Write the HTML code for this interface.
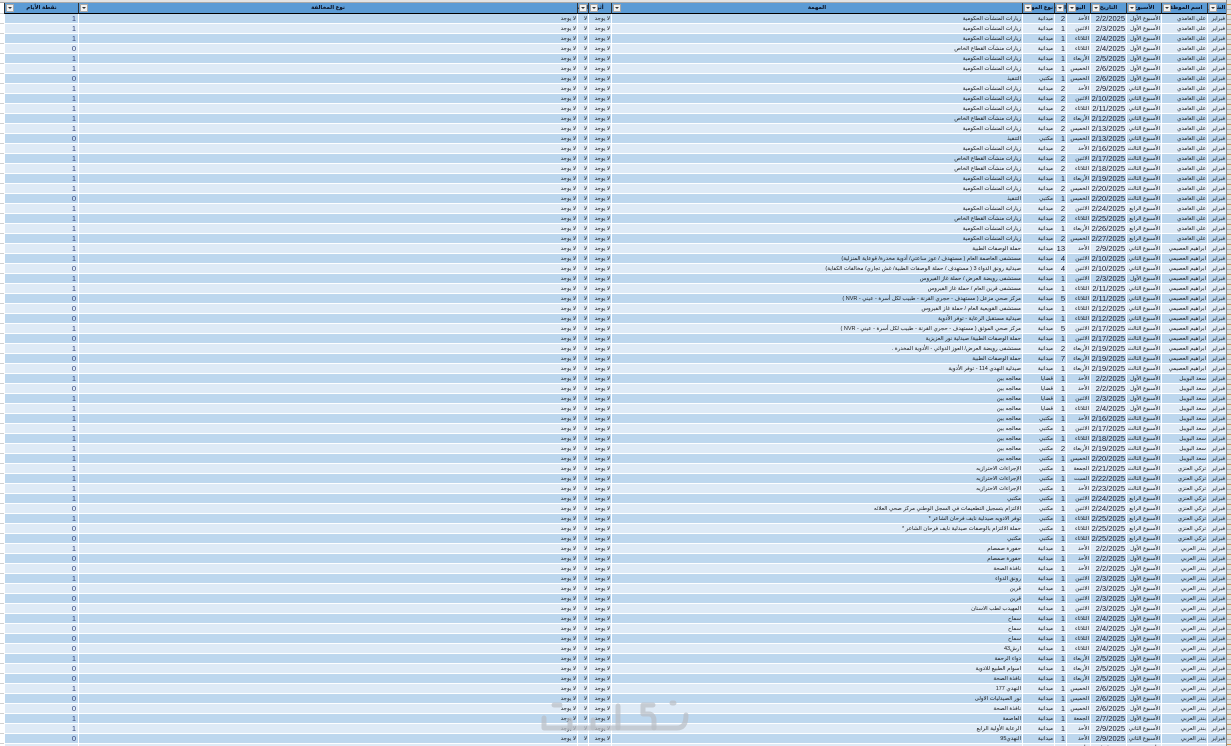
<!DOCTYPE html>
<html lang="ar"><head><meta charset="utf-8"><title>sheet</title>
<style>
html,body{margin:0;padding:0;width:1231px;height:746px;overflow:hidden;background:#fff}
body{position:relative;font-family:"Liberation Sans","DejaVu Sans",sans-serif}
#top{position:absolute;left:0;top:0;width:1231px;height:3px;background:#e4e4e4;border-bottom:1px solid #aaa;box-sizing:border-box}
#lft{position:absolute;left:0;top:4px;width:4px;height:742px;background:repeating-linear-gradient(to bottom,#fff 0,#fff 9px,#d0d0d0 9px,#d0d0d0 10px)}
#rgt{position:absolute;left:1226px;top:0;width:5px;height:746px;background:repeating-linear-gradient(to bottom,#dedede 0,#dedede 4px,#d99a4e 4px,#d99a4e 5px,#dedede 5px,#dedede 9px,#b8b8b8 9px,#b8b8b8 10px);border-left:1px solid #8a8a8a;box-sizing:border-box}
table{position:absolute;left:4px;top:3px;width:1222px;table-layout:fixed;border-collapse:separate;border-spacing:0}
th{position:relative;height:11px;box-sizing:border-box;padding:0;background:#5b9bd5;border-left:1px solid #333;border-bottom:1px solid #000;font:bold 5.5px/10px "Liberation Sans","DejaVu Sans",sans-serif;color:#0a1020;overflow:hidden;white-space:nowrap;text-align:center}
th i{position:absolute;left:1px;top:1px;width:8px;height:8px;box-sizing:border-box;background:#f2f2f2;border:1px solid #a8a8a8}
th i:after{content:"";position:absolute;left:1px;top:2px;border:2px solid transparent;border-top:2px solid #333;border-bottom:0}
td{height:10px;box-sizing:border-box;padding:1px 1px 0;border-left:1px solid #fff;border-bottom:1px solid #fff;font-size:5.5px;line-height:8px;color:#1a1a1a;overflow:hidden;white-space:nowrap;text-align:right}
tbody tr:nth-child(odd) td{background:#bdd7ee}
tbody tr:nth-child(even) td{background:#deeaf6}
td:nth-child(4),td:nth-child(6){font-size:7.5px;color:#1a1a2a}
td:nth-child(12){font-size:7.5px;color:#33427a;padding-right:2px}
svg{position:absolute;left:540px;top:700px;pointer-events:none}
</style></head><body>
<div id="top"></div><div id="lft"></div><div id="rgt"></div>
<table dir="rtl">
<colgroup><col style="width:19px"><col style="width:46px"><col style="width:35px"><col style="width:36px"><col style="width:24px"><col style="width:12px"><col style="width:32px"><col style="width:411px"><col style="width:23px"><col style="width:11px"><col style="width:499px"><col style="width:74px"></colgroup>
<thead><tr><th><i></i>الشهر<th><i></i>اسم الموظف<th><i></i>الأسبوع<th><i></i>التاريخ<th><i></i>اليوم<th><i></i>العدد<th><i></i>نوع المهمة<th><i></i>المهمة<th><i></i>أثر<th><i></i>الإجراء<th><i></i>نوع المخالفة<th><i></i>نقطة الأيام</tr></thead>
<tbody>
<tr><td>فبراير<td>علي الغامدي<td>الأسبوع الأول<td>2/2/2025<td>الأحد<td>2<td>ميدانية<td>زيارات المنشآت الحكومية<td>لا يوجد<td>لا<td>لا يوجد<td>1
<tr><td>فبراير<td>علي الغامدي<td>الأسبوع الأول<td>2/3/2025<td>الاثنين<td>1<td>ميدانية<td>زيارات المنشآت الحكومية<td>لا يوجد<td>لا<td>لا يوجد<td>1
<tr><td>فبراير<td>علي الغامدي<td>الأسبوع الأول<td>2/4/2025<td>الثلاثاء<td>1<td>ميدانية<td>زيارات المنشآت الحكومية<td>لا يوجد<td>لا<td>لا يوجد<td>1
<tr><td>فبراير<td>علي الغامدي<td>الأسبوع الأول<td>2/4/2025<td>الثلاثاء<td>1<td>ميدانية<td>زيارات منشآت القطاع الخاص<td>لا يوجد<td>لا<td>لا يوجد<td>0
<tr><td>فبراير<td>علي الغامدي<td>الأسبوع الأول<td>2/5/2025<td>الأربعاء<td>1<td>ميدانية<td>زيارات المنشآت الحكومية<td>لا يوجد<td>لا<td>لا يوجد<td>1
<tr><td>فبراير<td>علي الغامدي<td>الأسبوع الأول<td>2/6/2025<td>الخميس<td>1<td>ميدانية<td>زيارات المنشآت الحكومية<td>لا يوجد<td>لا<td>لا يوجد<td>1
<tr><td>فبراير<td>علي الغامدي<td>الأسبوع الأول<td>2/6/2025<td>الخميس<td>1<td>مكتبي<td>التنفيذ<td>لا يوجد<td>لا<td>لا يوجد<td>0
<tr><td>فبراير<td>علي الغامدي<td>الأسبوع الثاني<td>2/9/2025<td>الأحد<td>2<td>ميدانية<td>زيارات المنشآت الحكومية<td>لا يوجد<td>لا<td>لا يوجد<td>1
<tr><td>فبراير<td>علي الغامدي<td>الأسبوع الثاني<td>2/10/2025<td>الاثنين<td>2<td>ميدانية<td>زيارات المنشآت الحكومية<td>لا يوجد<td>لا<td>لا يوجد<td>1
<tr><td>فبراير<td>علي الغامدي<td>الأسبوع الثاني<td>2/11/2025<td>الثلاثاء<td>2<td>ميدانية<td>زيارات المنشآت الحكومية<td>لا يوجد<td>لا<td>لا يوجد<td>1
<tr><td>فبراير<td>علي الغامدي<td>الأسبوع الثاني<td>2/12/2025<td>الأربعاء<td>2<td>ميدانية<td>زيارات منشآت القطاع الخاص<td>لا يوجد<td>لا<td>لا يوجد<td>1
<tr><td>فبراير<td>علي الغامدي<td>الأسبوع الثاني<td>2/13/2025<td>الخميس<td>2<td>ميدانية<td>زيارات المنشآت الحكومية<td>لا يوجد<td>لا<td>لا يوجد<td>1
<tr><td>فبراير<td>علي الغامدي<td>الأسبوع الثاني<td>2/13/2025<td>الخميس<td>1<td>مكتبي<td>التنفيذ<td>لا يوجد<td>لا<td>لا يوجد<td>0
<tr><td>فبراير<td>علي الغامدي<td>الأسبوع الثالث<td>2/16/2025<td>الأحد<td>2<td>ميدانية<td>زيارات المنشآت الحكومية<td>لا يوجد<td>لا<td>لا يوجد<td>1
<tr><td>فبراير<td>علي الغامدي<td>الأسبوع الثالث<td>2/17/2025<td>الاثنين<td>2<td>ميدانية<td>زيارات منشآت القطاع الخاص<td>لا يوجد<td>لا<td>لا يوجد<td>1
<tr><td>فبراير<td>علي الغامدي<td>الأسبوع الثالث<td>2/18/2025<td>الثلاثاء<td>2<td>ميدانية<td>زيارات منشآت القطاع الخاص<td>لا يوجد<td>لا<td>لا يوجد<td>1
<tr><td>فبراير<td>علي الغامدي<td>الأسبوع الثالث<td>2/19/2025<td>الأربعاء<td>1<td>ميدانية<td>زيارات المنشآت الحكومية<td>لا يوجد<td>لا<td>لا يوجد<td>1
<tr><td>فبراير<td>علي الغامدي<td>الأسبوع الثالث<td>2/20/2025<td>الخميس<td>2<td>ميدانية<td>زيارات المنشآت الحكومية<td>لا يوجد<td>لا<td>لا يوجد<td>1
<tr><td>فبراير<td>علي الغامدي<td>الأسبوع الثالث<td>2/20/2025<td>الخميس<td>1<td>مكتبي<td>التنفيذ<td>لا يوجد<td>لا<td>لا يوجد<td>0
<tr><td>فبراير<td>علي الغامدي<td>الأسبوع الرابع<td>2/24/2025<td>الاثنين<td>2<td>ميدانية<td>زيارات المنشآت الحكومية<td>لا يوجد<td>لا<td>لا يوجد<td>1
<tr><td>فبراير<td>علي الغامدي<td>الأسبوع الرابع<td>2/25/2025<td>الثلاثاء<td>2<td>ميدانية<td>زيارات منشآت القطاع الخاص<td>لا يوجد<td>لا<td>لا يوجد<td>1
<tr><td>فبراير<td>علي الغامدي<td>الأسبوع الرابع<td>2/26/2025<td>الأربعاء<td>1<td>ميدانية<td>زيارات المنشآت الحكومية<td>لا يوجد<td>لا<td>لا يوجد<td>1
<tr><td>فبراير<td>علي الغامدي<td>الأسبوع الرابع<td>2/27/2025<td>الخميس<td>2<td>ميدانية<td>زيارات المنشآت الحكومية<td>لا يوجد<td>لا<td>لا يوجد<td>1
<tr><td>فبراير<td>ابراهيم العصيمي<td>الأسبوع الثاني<td>2/9/2025<td>الأحد<td>13<td>ميدانية<td>حملة الوصفات الطبية<td>لا يوجد<td>لا<td>لا يوجد<td>1
<tr><td>فبراير<td>ابراهيم العصيمي<td>الأسبوع الثاني<td>2/10/2025<td>الاثنين<td>4<td>ميدانية<td>مستشفى العاصمة العام ( مستهدف / عوز ساعتي/ أدوية مخدرة/ قوعاية المنزلية)<td>لا يوجد<td>لا<td>لا يوجد<td>1
<tr><td>فبراير<td>ابراهيم العصيمي<td>الأسبوع الثاني<td>2/10/2025<td>الاثنين<td>4<td>ميدانية<td>صيدلية رونق الدواء 3 ( مستهدف / حملة الوصفات الطبية/ غش تجاري/ مخالفات الكفاية)<td>لا يوجد<td>لا<td>لا يوجد<td>0
<tr><td>فبراير<td>ابراهيم العصيمي<td>الأسبوع الأول<td>2/3/2025<td>الاثنين<td>1<td>ميدانية<td>مستشفى رويضة العرض / حملة غاز الفيروس<td>لا يوجد<td>لا<td>لا يوجد<td>1
<tr><td>فبراير<td>ابراهيم العصيمي<td>الأسبوع الثاني<td>2/11/2025<td>الثلاثاء<td>1<td>ميدانية<td>مستشفى قرين العام / حملة غاز الفيروس<td>لا يوجد<td>لا<td>لا يوجد<td>1
<tr><td>فبراير<td>ابراهيم العصيمي<td>الأسبوع الثاني<td>2/11/2025<td>الثلاثاء<td>5<td>ميدانية<td>مركز صحي مزعل ( مستهدف - حجري القرنة - طبيب لكل أسرة - عيني - NVR )<td>لا يوجد<td>لا<td>لا يوجد<td>0
<tr><td>فبراير<td>ابراهيم العصيمي<td>الأسبوع الثاني<td>2/12/2025<td>الثلاثاء<td>1<td>ميدانية<td>مستشفى القويعية العام / حملة غاز الفيروس<td>لا يوجد<td>لا<td>لا يوجد<td>0
<tr><td>فبراير<td>ابراهيم العصيمي<td>الأسبوع الثاني<td>2/12/2025<td>الثلاثاء<td>1<td>ميدانية<td>صيدلية مستقبل الرعاية - توفر الأدوية<td>لا يوجد<td>لا<td>لا يوجد<td>0
<tr><td>فبراير<td>ابراهيم العصيمي<td>الأسبوع الثالث<td>2/17/2025<td>الاثنين<td>5<td>ميدانية<td>مركز صحي الموثق ( مستهدف - حجري القرنة - طبيب لكل أسرة - عيني - NVR )<td>لا يوجد<td>لا<td>لا يوجد<td>1
<tr><td>فبراير<td>ابراهيم العصيمي<td>الأسبوع الثالث<td>2/17/2025<td>الاثنين<td>1<td>ميدانية<td>حملة الوصفات الطبية/ صيدلية نور العزيزية<td>لا يوجد<td>لا<td>لا يوجد<td>0
<tr><td>فبراير<td>ابراهيم العصيمي<td>الأسبوع الثالث<td>2/19/2025<td>الأربعاء<td>2<td>ميدانية<td>مستشفى رويضة العرض/ العوز الدوائي - الأدوية المخدرة .<td>لا يوجد<td>لا<td>لا يوجد<td>1
<tr><td>فبراير<td>ابراهيم العصيمي<td>الأسبوع الثالث<td>2/19/2025<td>الأربعاء<td>7<td>ميدانية<td>حملة الوصفات الطبية<td>لا يوجد<td>لا<td>لا يوجد<td>0
<tr><td>فبراير<td>ابراهيم العصيمي<td>الأسبوع الثالث<td>2/19/2025<td>الأربعاء<td>1<td>ميدانية<td>صيدلية النهدي 114 - توفر الأدوية<td>لا يوجد<td>لا<td>لا يوجد<td>0
<tr><td>فبراير<td>سعد البويبل<td>الأسبوع الأول<td>2/2/2025<td>الأحد<td>1<td>قضايا<td>معالجه بين<td>لا يوجد<td>لا<td>لا يوجد<td>1
<tr><td>فبراير<td>سعد البويبل<td>الأسبوع الأول<td>2/2/2025<td>الأحد<td>1<td>قضايا<td>معالجه بين<td>لا يوجد<td>لا<td>لا يوجد<td>0
<tr><td>فبراير<td>سعد البويبل<td>الأسبوع الأول<td>2/3/2025<td>الاثنين<td>1<td>قضايا<td>معالجه بين<td>لا يوجد<td>لا<td>لا يوجد<td>1
<tr><td>فبراير<td>سعد البويبل<td>الأسبوع الأول<td>2/4/2025<td>الثلاثاء<td>1<td>قضايا<td>معالجه بين<td>لا يوجد<td>لا<td>لا يوجد<td>1
<tr><td>فبراير<td>سعد البويبل<td>الأسبوع الثالث<td>2/16/2025<td>الأحد<td>1<td>مكتبي<td>معالجه بين<td>لا يوجد<td>لا<td>لا يوجد<td>1
<tr><td>فبراير<td>سعد البويبل<td>الأسبوع الثالث<td>2/17/2025<td>الاثنين<td>1<td>مكتبي<td>معالجه بين<td>لا يوجد<td>لا<td>لا يوجد<td>1
<tr><td>فبراير<td>سعد البويبل<td>الأسبوع الثالث<td>2/18/2025<td>الثلاثاء<td>1<td>مكتبي<td>معالجه بين<td>لا يوجد<td>لا<td>لا يوجد<td>1
<tr><td>فبراير<td>سعد البويبل<td>الأسبوع الثالث<td>2/19/2025<td>الأربعاء<td>2<td>مكتبي<td>معالجه بين<td>لا يوجد<td>لا<td>لا يوجد<td>1
<tr><td>فبراير<td>سعد البويبل<td>الأسبوع الثالث<td>2/20/2025<td>الخميس<td>1<td>مكتبي<td>معالجه بين<td>لا يوجد<td>لا<td>لا يوجد<td>1
<tr><td>فبراير<td>تركي العنزي<td>الأسبوع الثالث<td>2/21/2025<td>الجمعة<td>1<td>مكتبي<td>الإجراءات الاحترازيه<td>لا يوجد<td>لا<td>لا يوجد<td>1
<tr><td>فبراير<td>تركي العنزي<td>الأسبوع الثالث<td>2/22/2025<td>السبت<td>1<td>مكتبي<td>الإجراءات الاحترازيه<td>لا يوجد<td>لا<td>لا يوجد<td>1
<tr><td>فبراير<td>تركي العنزي<td>الأسبوع الثالث<td>2/23/2025<td>الأحد<td>1<td>مكتبي<td>الإجراءات الاحترازيه<td>لا يوجد<td>لا<td>لا يوجد<td>1
<tr><td>فبراير<td>تركي العنزي<td>الأسبوع الرابع<td>2/24/2025<td>الاثنين<td>1<td>مكتبي<td>مكتبي<td>لا يوجد<td>لا<td>لا يوجد<td>1
<tr><td>فبراير<td>تركي العنزي<td>الأسبوع الرابع<td>2/24/2025<td>الاثنين<td>1<td>مكتبي<td>الالتزام بتسجيل التطعيمات في السجل الوطني مركز صحي العلائه<td>لا يوجد<td>لا<td>لا يوجد<td>0
<tr><td>فبراير<td>تركي العنزي<td>الأسبوع الرابع<td>2/25/2025<td>الثلاثاء<td>1<td>مكتبي<td>توفر الادويه صيدلية نايف فرحان الشاعر *<td>لا يوجد<td>لا<td>لا يوجد<td>1
<tr><td>فبراير<td>تركي العنزي<td>الأسبوع الرابع<td>2/25/2025<td>الثلاثاء<td>1<td>مكتبي<td>حملة الالتزام بالوصفات صيدلية نايف فرحان الشاعر *<td>لا يوجد<td>لا<td>لا يوجد<td>0
<tr><td>فبراير<td>تركي العنزي<td>الأسبوع الرابع<td>2/25/2025<td>الثلاثاء<td>1<td>مكتبي<td>مكتبي<td>لا يوجد<td>لا<td>لا يوجد<td>0
<tr><td>فبراير<td>بندر العربي<td>الأسبوع الأول<td>2/2/2025<td>الأحد<td>1<td>ميدانية<td>حفورة صمصام<td>لا يوجد<td>لا<td>لا يوجد<td>1
<tr><td>فبراير<td>بندر العربي<td>الأسبوع الأول<td>2/2/2025<td>الأحد<td>1<td>ميدانية<td>حفورة صمصام<td>لا يوجد<td>لا<td>لا يوجد<td>0
<tr><td>فبراير<td>بندر العربي<td>الأسبوع الأول<td>2/2/2025<td>الأحد<td>1<td>ميدانية<td>نافذة الصحة<td>لا يوجد<td>لا<td>لا يوجد<td>0
<tr><td>فبراير<td>بندر العربي<td>الأسبوع الأول<td>2/3/2025<td>الاثنين<td>1<td>ميدانية<td>رونق الدواء<td>لا يوجد<td>لا<td>لا يوجد<td>1
<tr><td>فبراير<td>بندر العربي<td>الأسبوع الأول<td>2/3/2025<td>الاثنين<td>1<td>ميدانية<td>قرين<td>لا يوجد<td>لا<td>لا يوجد<td>0
<tr><td>فبراير<td>بندر العربي<td>الأسبوع الأول<td>2/3/2025<td>الاثنين<td>1<td>ميدانية<td>قرين<td>لا يوجد<td>لا<td>لا يوجد<td>0
<tr><td>فبراير<td>بندر العربي<td>الأسبوع الأول<td>2/3/2025<td>الاثنين<td>1<td>ميدانية<td>المهيدب لطب الاسنان<td>لا يوجد<td>لا<td>لا يوجد<td>0
<tr><td>فبراير<td>بندر العربي<td>الأسبوع الأول<td>2/4/2025<td>الثلاثاء<td>1<td>ميدانية<td>سماح<td>لا يوجد<td>لا<td>لا يوجد<td>1
<tr><td>فبراير<td>بندر العربي<td>الأسبوع الأول<td>2/4/2025<td>الثلاثاء<td>1<td>ميدانية<td>سماح<td>لا يوجد<td>لا<td>لا يوجد<td>0
<tr><td>فبراير<td>بندر العربي<td>الأسبوع الأول<td>2/4/2025<td>الثلاثاء<td>1<td>ميدانية<td>سماح<td>لا يوجد<td>لا<td>لا يوجد<td>0
<tr><td>فبراير<td>بندر العربي<td>الأسبوع الأول<td>2/4/2025<td>الثلاثاء<td>1<td>ميدانية<td>ارش43<td>لا يوجد<td>لا<td>لا يوجد<td>0
<tr><td>فبراير<td>بندر العربي<td>الأسبوع الأول<td>2/5/2025<td>الأربعاء<td>1<td>ميدانية<td>دواء الرحمة<td>لا يوجد<td>لا<td>لا يوجد<td>1
<tr><td>فبراير<td>بندر العربي<td>الأسبوع الأول<td>2/5/2025<td>الأربعاء<td>1<td>ميدانية<td>اسوام الطبيع للادوية<td>لا يوجد<td>لا<td>لا يوجد<td>0
<tr><td>فبراير<td>بندر العربي<td>الأسبوع الأول<td>2/5/2025<td>الأربعاء<td>1<td>ميدانية<td>نافذة الصحة<td>لا يوجد<td>لا<td>لا يوجد<td>0
<tr><td>فبراير<td>بندر العربي<td>الأسبوع الأول<td>2/6/2025<td>الخميس<td>1<td>ميدانية<td>النهدي 177<td>لا يوجد<td>لا<td>لا يوجد<td>1
<tr><td>فبراير<td>بندر العربي<td>الأسبوع الأول<td>2/6/2025<td>الخميس<td>1<td>ميدانية<td>نور الصيدليات الاولى<td>لا يوجد<td>لا<td>لا يوجد<td>0
<tr><td>فبراير<td>بندر العربي<td>الأسبوع الأول<td>2/6/2025<td>الخميس<td>1<td>ميدانية<td>نافذة الصحة<td>لا يوجد<td>لا<td>لا يوجد<td>0
<tr><td>فبراير<td>بندر العربي<td>الأسبوع الأول<td>2/7/2025<td>الجمعة<td>1<td>ميدانية<td>العاصمة<td>لا يوجد<td>لا<td>لا يوجد<td>1
<tr><td>فبراير<td>بندر العربي<td>الأسبوع الثاني<td>2/9/2025<td>الأحد<td>1<td>ميدانية<td>الرعاية الأولية الرابع<td>لا يوجد<td>لا<td>لا يوجد<td>1
<tr><td>فبراير<td>بندر العربي<td>الأسبوع الثاني<td>2/9/2025<td>الأحد<td>1<td>ميدانية<td>النهدي95<td>لا يوجد<td>لا<td>لا يوجد<td>0
<tr><td>فبراير<td>بندر العربي<td>الأسبوع الثاني<td>2/9/2025<td>الأحد<td>1<td>ميدانية<td>النهدي<td>لا يوجد<td>لا<td>لا يوجد<td>1
</tbody></table>
<svg width="150" height="34" viewBox="0 0 150 34" fill="none" stroke="#b9bec4" stroke-opacity=".7" stroke-width="5" stroke-linecap="round" stroke-linejoin="round"><path d="M146 15c0 9-3 13-9 13H4V18"/><path d="M113 5h-10v9h6c3 0 5 3 5 6v8"/><path d="M78 6v22"/><path d="M53 20v8M30 20v8"/><path d="M14 5h6"/><path d="M132 3h2"/></svg>
</body></html>
